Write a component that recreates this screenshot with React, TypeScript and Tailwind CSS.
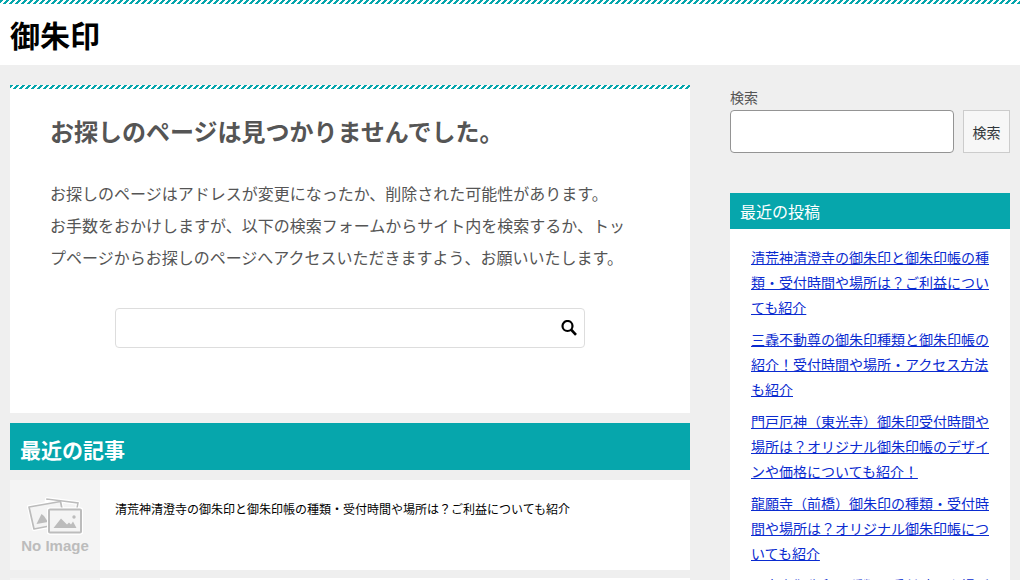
import { useState } from "react";
import type { FormEvent } from "react";

const recentPosts = [
  "清荒神清澄寺の御朱印と御朱印帳の種類・受付時間や場所は？ご利益についても紹介",
  "三毳不動尊の御朱印種類と御朱印帳の紹介！受付時間や場所・アクセス方法も紹介",
  "門戸厄神（東光寺）御朱印受付時間や場所は？オリジナル御朱印帳のデザインや価格についても紹介！",
  "龍願寺（前橋）御朱印の種類・受付時間や場所は？オリジナル御朱印帳についても紹介",
  "日本寺御朱印の種類・受付時間や場所は？御朱印帳についても紹介",
];

function Stripe() {
  return (
    <div className="h-1 bg-[linear-gradient(-45deg,#fff_25%,#06a6ac_25%,#06a6ac_50%,#fff_50%,#fff_75%,#06a6ac_75%,#06a6ac)] bg-[size:6px_6px]" />
  );
}

function NoImage() {
  return (
    <svg viewBox="0 0 90 90" className="h-[90px] w-[90px] shrink-0 bg-[#f4f4f4]" role="img" aria-label="No Image">
      <g stroke="#fff" strokeWidth="4" strokeLinejoin="round" fill="#f4f4f4">
        <path d="M37 19 68 23 64 46 34 42Z" />
        <path d="M19 27 50.5 21.5 55 43 24 49Z" />
        <rect x="39" y="29.5" width="32" height="23" rx="1" />
      </g>
      <path d="M37 20V19L68 23 67 28" fill="none" stroke="#bcbcbc" strokeWidth="1.5" />
      <path d="M19 27 50.5 21.5 55 43 24 49Z" fill="#f4f4f4" stroke="#bcbcbc" strokeWidth="1.7" strokeLinejoin="round" />
      <path d="M26.5 44 31.5 34 34 36 38 42Z" fill="#bcbcbc" />
      <rect x="37" y="27.5" width="36" height="27" rx="2" fill="#fff" />
      <rect x="39" y="29.5" width="32" height="23" rx="1" fill="#f4f4f4" stroke="#bcbcbc" strokeWidth="2" />
      <path d="M43.5 48 51 38.5 57 44.5 59 42.5 61 44.5 63 41.5 66.5 48Z" fill="#bcbcbc" />
      <circle cx="64" cy="37" r="1.7" fill="#bcbcbc" />
      <text x="45" y="71" textAnchor="middle" fontFamily="Liberation Sans, sans-serif" fontWeight="700" fontSize="15" fill="#bcbcbc">
        No Image
      </text>
    </svg>
  );
}

function SearchIcon() {
  return (
    <svg viewBox="0 0 16 16" className="h-4 w-4" fill="none" stroke="#000" aria-hidden="true">
      <circle cx="6.5" cy="6" r="5" strokeWidth="2.2" />
      <path d="M10 9.5 15 14.8" strokeWidth="2.6" />
    </svg>
  );
}

export default function App() {
  const [query, setQuery] = useState("");
  const [sideQuery, setSideQuery] = useState("");

  const handleSubmit = (e: FormEvent) => {
    e.preventDefault();
  };

  return (
    <div className="min-h-screen bg-[#efefef] font-['Noto_Sans_CJK_JP',sans-serif] text-[#555]">
      <header className="bg-white">
        <Stripe />
        <div className="px-[10px] py-2">
          <a href="#" className="block text-[30px] leading-[45px] font-bold text-black">御朱印</a>
        </div>
      </header>

      <div className="flex items-start gap-10 px-[10px] pt-5">
        <main className="min-w-0 flex-1">
          <article className="bg-white">
            <Stripe />
            <div className="px-10 pt-6 pb-[65px]">
              <h1 className="text-2xl leading-9 font-bold">お探しのページは見つかりませんでした。</h1>
              <p className="mt-7 text-base leading-8">
                お探しのページはアドレスが変更になったか、削除された可能性があります。
                <br />
                お手数をおかけしますが、以下の検索フォームからサイト内を検索するか、トッ
                <br />
                プページからお探しのページへアクセスいただきますよう、お願いいたします。
              </p>
              <form onSubmit={handleSubmit} className="mx-auto mt-[35px] flex h-10 max-w-[470px] items-center rounded border border-[#ddd]">
                <input type="text" aria-label="サイト内検索" value={query} onChange={(e) => setQuery(e.target.value)} className="h-full min-w-0 flex-1 px-3 outline-none" />
                <button type="submit" aria-label="検索" className="px-[7px]">
                  <SearchIcon />
                </button>
              </form>
            </div>
          </article>

          <section className="mt-[10px]">
            <h2 className="bg-[#06a6ac] px-[10px] pt-[10px] pb-[5px] text-[21px] leading-8 font-bold text-white">最近の記事</h2>
            {recentPosts.slice(0, 2).map((post, index) => (
              <a key={post} href="#" className={`${index === 0 ? "mt-[10px]" : "mt-2"} flex bg-white text-black`}>
                <NoImage />
                <span className="px-[15px] pt-5 text-xs leading-[18px]">{post}</span>
              </a>
            ))}
          </section>
        </main>

        <aside className="w-[280px] shrink-0">
          <form onSubmit={handleSubmit}>
            <label htmlFor="side-search" className="block text-sm leading-[25px]">検索</label>
            <div className="flex h-[43px] gap-[9px]">
              <input id="side-search" type="text" value={sideQuery} onChange={(e) => setSideQuery(e.target.value)} className="min-w-0 flex-1 rounded border border-[#949494] bg-white px-2" />
              <button type="submit" className="w-[47px] border border-[#ccc] bg-[#f7f7f7] text-sm text-[#32373c]">検索</button>
            </div>
          </form>

          <section className="mt-10 bg-white">
            <h3 className="bg-[#06a6ac] px-[10px] py-[6px] text-base leading-6 text-white">最近の投稿</h3>
            <ul className="flex flex-col gap-[7px] px-[21px] pt-4">
              {recentPosts.map((post) => (
                <li key={post} className="text-sm leading-[25px]">
                  <a href="#" className="text-[#0a2bd0] underline">{post}</a>
                </li>
              ))}
            </ul>
          </section>
        </aside>
      </div>
    </div>
  );
}
